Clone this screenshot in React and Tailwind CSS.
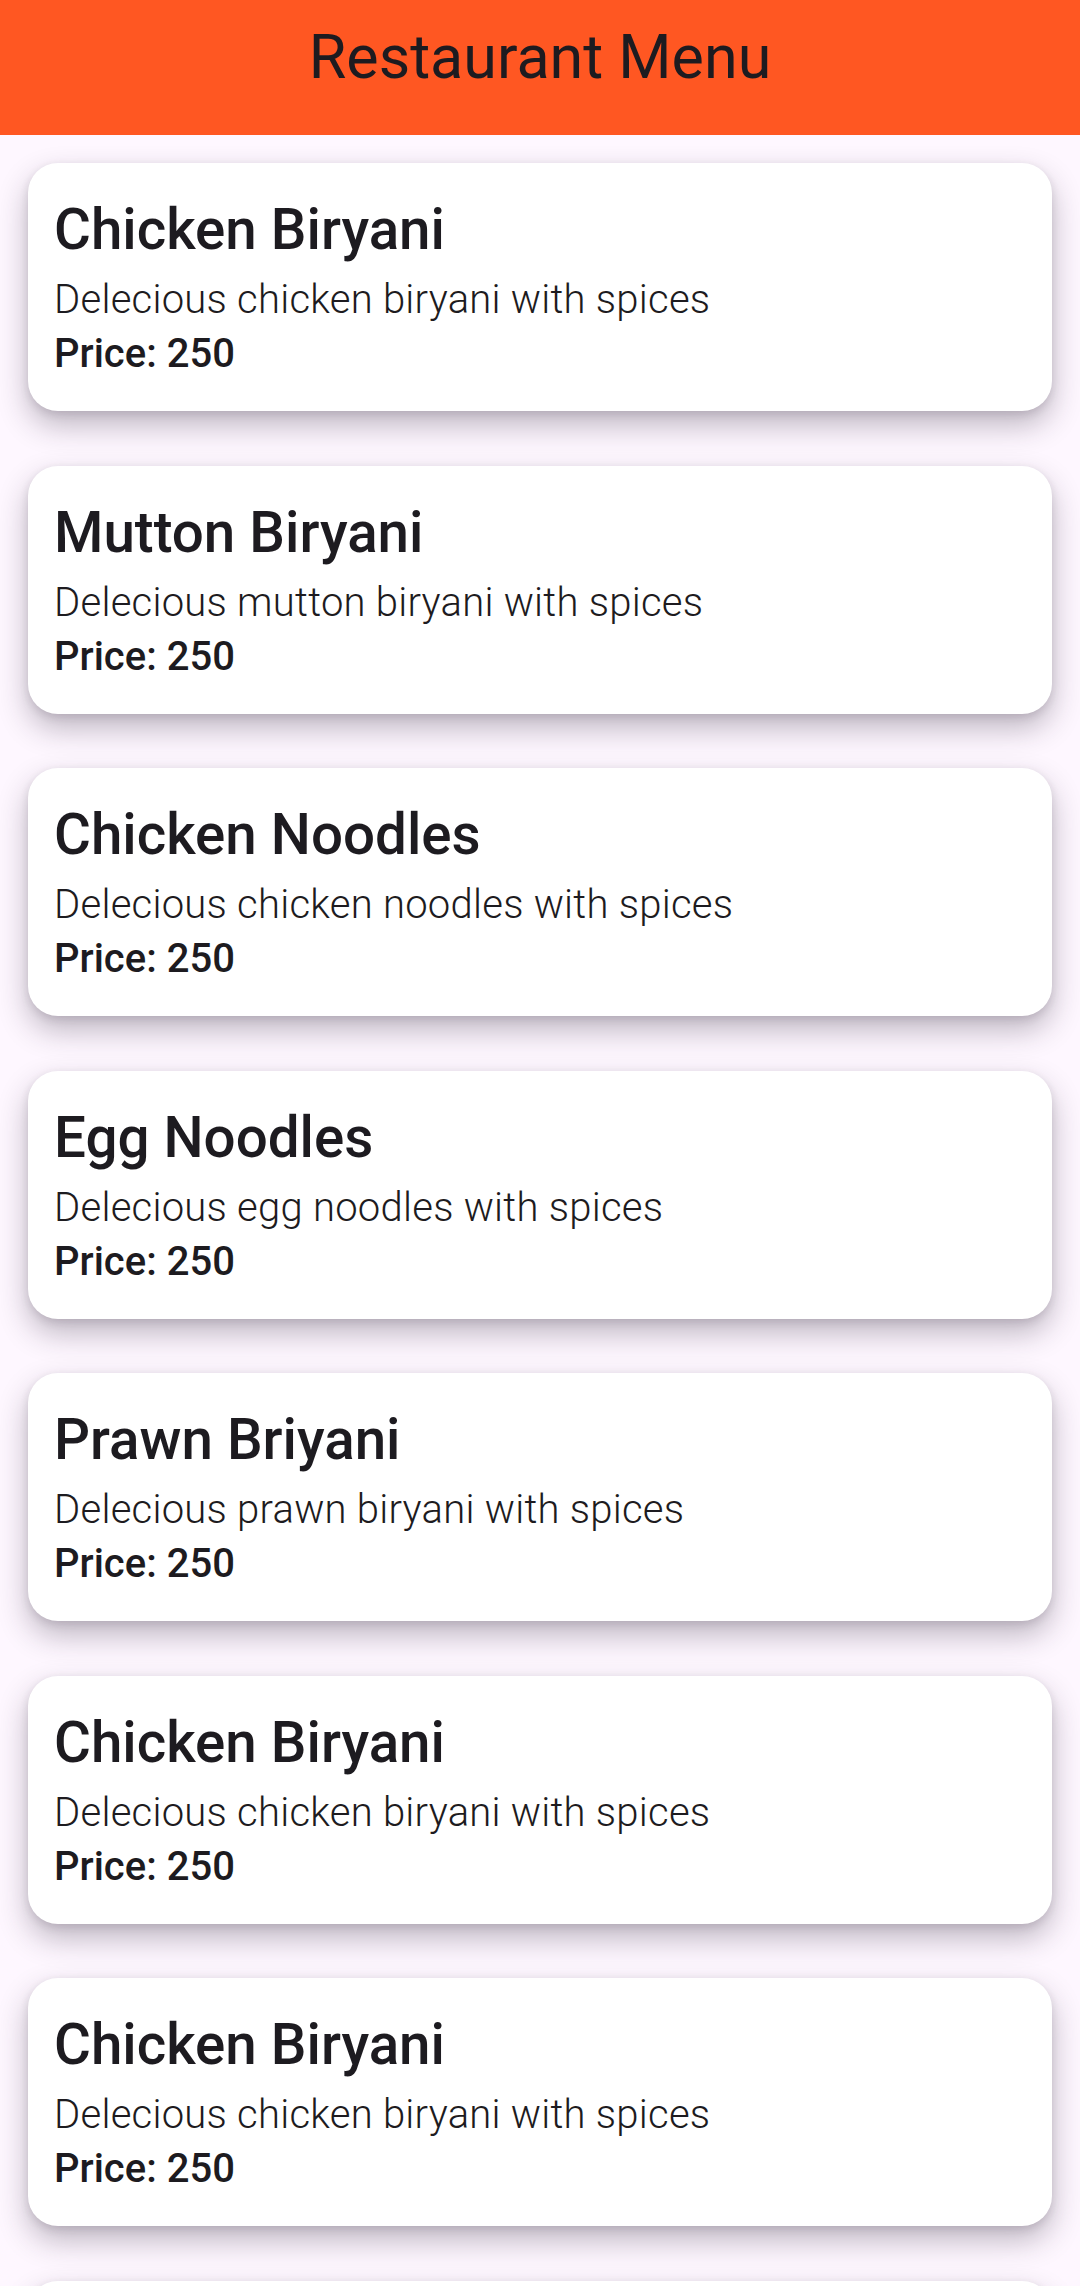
import React from "react";

const menuItems = [
  { name: "Chicken Biryani", description: "Delecious chicken biryani with spices", price: 250 },
  { name: "Mutton Biryani", description: "Delecious mutton biryani with spices", price: 250 },
  { name: "Chicken Noodles", description: "Delecious chicken noodles with spices", price: 250 },
  { name: "Egg Noodles", description: "Delecious egg noodles with spices", price: 250 },
  { name: "Prawn Briyani", description: "Delecious prawn biryani with spices", price: 250 },
  { name: "Chicken Biryani", description: "Delecious chicken biryani with spices", price: 250 },
  { name: "Chicken Biryani", description: "Delecious chicken biryani with spices", price: 250 },
  { name: "Chicken Biryani", description: "Delecious chicken biryani with spices", price: 250 },
];

// Single menu card
function MenuCard({ name, description, price }) {
  return (
    <div className="bg-white rounded-[30px] pt-[33px] pb-[34px] px-[26px] shadow-[0_14px_30px_rgba(40,30,50,0.3),0_3px_8px_rgba(40,30,50,0.12)]">
      <h2 className="text-[56.5px] leading-[68px] font-medium text-[#1d1b20]">{name}</h2>
      <p className="mt-[12px] text-[40px] leading-[47px] font-light tracking-[0.25px] text-[#1d1b20]">{description}</p>
      <p className="mt-[7px] text-[40px] leading-[47px] font-medium text-[#1d1b20]">Price: {price}</p>
    </div>
  );
}

export default function App() {
  return (
    <div
      className="h-screen overflow-hidden bg-[#fef7ff]"
      style={{ fontFamily: "Roboto, 'Noto Sans', sans-serif" }}
    >
      {/* App bar */}
      <header className="h-[135px] bg-[#ff5722] flex justify-center pt-[21px]">
        <h1 className="text-[61px] leading-[72px] font-normal text-[#1d1b20]">Restaurant Menu</h1>
      </header>

      {/* Menu list */}
      <div className="px-[28px] pt-[28px] flex flex-col gap-[54.5px]">
        {menuItems.map((item, i) => (
          <MenuCard key={i} {...item} />
        ))}
      </div>
    </div>
  );
}
